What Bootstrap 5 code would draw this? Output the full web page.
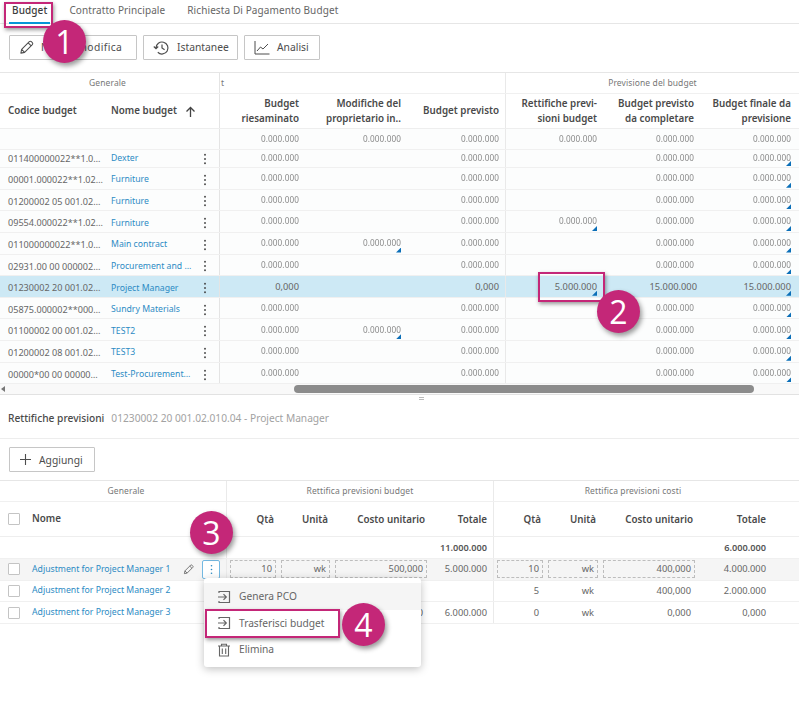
<!DOCTYPE html>
<html lang="it">
<head>
<meta charset="utf-8">
<title>Budget</title>
<link href="https://cdn.jsdelivr.net/npm/bootstrap@5.3.0/dist/css/bootstrap.min.css" rel="stylesheet">
<style>
html,body{margin:0;background:#fff}
body{font-family:"Noto Sans","Liberation Sans",sans-serif;font-size:9.3px;color:#666;width:799px;height:702px;overflow:hidden;position:relative}
.tabbar{height:24px;border-bottom:1px solid #e6e6e6;padding-left:9px;gap:16px}
.tabitem{font-size:10px;color:#666;padding:3px 3px 0;height:24px;line-height:15px;letter-spacing:.1px}
.tabitem.on{color:#3c3c3c;font-weight:500;border-bottom:2px solid #0696d7}
.tools{height:48px;padding:11px 0 0 9px;gap:6px}
.tbtn{height:25px;padding:0 9px;border:1px solid #c6c6c6;border-radius:1px;background:#fff;font-size:10.3px;color:#4d4d4d;display:flex;align-items:center;gap:7px;line-height:1;white-space:nowrap}
.tbtn:hover{background:#fff;color:#4d4d4d;border-color:#c6c6c6}
.tbtn svg{flex:none}
.w-a{width:128px;letter-spacing:.4px}
.w-b{width:95px}
.w-c{width:76px}
.w-d{width:86px}
.gb{display:grid;grid-template-columns:103px 92px 25px 85px 102px 99px 97px 97px 99px}
.gp{display:grid;grid-template-columns:227px 51px 54px 97px 65px 51px 55px 97px 75px 27px}
.rowline{border-bottom:1px solid #f0f0f0;background:#fcfdfd}
.r-g{height:22px;border-top:1px solid #e6e6e6;border-bottom:1px solid #f0f0f0;background:#fff}
.r-h{height:35px;border-bottom:1px solid #eee;background:#fff}
.r-t{height:21px}
.r-s{height:18px}
.r-n{height:21.65px}
.r-n .lf,.r-n .keb{padding-top:3px}
.sel{background:#cde9f5}
.ghead{font-size:8.5px;color:#777;display:flex;align-items:center;justify-content:center;letter-spacing:.1px}
.hc{font-size:9.8px;font-weight:600;color:#4a4a4a;line-height:14.5px;display:flex;align-items:center;padding-top:1px}
.hr{justify-content:flex-end;text-align:right;padding-right:6px}
.vl{position:relative;display:flex;align-items:center;justify-content:flex-end;padding-right:6px;white-space:nowrap;min-width:0}
.lf{display:flex;align-items:center;white-space:nowrap;overflow:hidden;min-width:0}
.cod{padding-left:8px;color:#666;font-size:9.1px}
.lnk{color:#2c8bc4;text-decoration:none;padding-left:8px;font-size:8.7px}
.keb{display:flex;align-items:center;justify-content:center;border-right:1px solid #e4e4e4;padding-right:4px}
.edge{border-right:1px solid #e9e9e9}
.endc{padding-right:8px}
.nudge{padding-right:3px}
.fz{font-size:8.2px;color:#8a8a8a;filter:blur(.7px);letter-spacing:.1px}
.tri{position:absolute;right:6px;bottom:1px;width:5px;height:5px;background:#0b6fb8;clip-path:polygon(100% 0,100% 100%,0 100%)}
.endc .tri{right:8px}
.sbar{height:11px;background:#f9f9f9;border-bottom:1px solid #e2e2e2;position:relative;padding:1px 45px 0 294px}
.sthumb{height:8px;background:#8c8c8c;border-radius:4px}
.sarrow{position:absolute;left:1px;top:2px;width:0;height:0;border-top:3px solid transparent;border-bottom:3px solid transparent;border-right:4px solid #777}
.splitter{height:6px;display:flex;align-items:center;padding-left:419px}
.split-mark{width:5px;height:3px;border-top:1px solid #bbb;border-bottom:1px solid #bbb}
.ttl{height:38px;border-bottom:1px solid #ededed;padding-left:8px;font-size:10.2px;gap:7px;align-items:center;padding-bottom:2px}
.ttl b{font-weight:500;color:#4a4a4a}
.ttl span{color:#a2a2a2}
.addbar{height:41px;padding:8px 0 0 9px}
.chk{width:12px;height:12px;border:1px solid #c4c4c4;border-radius:1px;background:#fff;flex:none;margin-left:8px}
.nm{color:#2c8bc4;text-decoration:none;font-size:8.7px;margin-left:12px}
.nmh{font-size:9.8px;font-weight:600;color:#4a4a4a;margin-left:12px}
.tt{font-weight:600;color:#555;font-size:9.2px}
.phd{padding-right:4px}
.ipt{position:absolute;top:1px;bottom:2px;left:3px;right:2px;border:1px dashed #bdbdbd;display:flex;align-items:center;justify-content:flex-end;padding-right:3px}
.r-h2{height:35px;border-bottom:1px solid #eee;background:#fff}
.r-p{height:21.65px;border-bottom:1px solid #f0f0f0;background:#fff}
.r-hi{background:#f5f5f5}
.rem{border-right:1px solid #eaeaea}
.ghoff{padding-left:26px}
.kbtn{width:18px;height:19px;border:1px solid #74b9e2;border-radius:2px;background:#fff;display:flex;align-items:center;justify-content:center;margin-left:8px;margin-right:6px;flex:none}
.menuish{position:absolute;left:204px;top:578px;width:217px;height:89px;background:#fff;border-radius:3px;box-shadow:0 2px 8px rgba(0,0,0,.25);padding-top:5px}
.mitem{height:26.5px;padding-left:13px;gap:8px;display:flex;align-items:center;font-size:10.2px;color:#666}
.mitem.first{background:#f5f5f5;height:27px}
.pinkbox{position:absolute;border:2px solid #c42778;box-shadow:1px 2px 4px rgba(0,0,0,.4)}
.dot-n{position:absolute;width:43px;height:43px;border-radius:50%;background:#c42778;color:#fff;font-family:"Open Sans","Liberation Sans",sans-serif;font-size:32px;display:flex;align-items:center;justify-content:center;box-shadow:2px 3px 5px rgba(0,0,0,.4);line-height:1}
</style>
</head>
<body>
<svg width="0" height="0" class="position-absolute">
<symbol id="kb" viewBox="0 0 4 14"><circle cx="2" cy="2" r="1.1"/><circle cx="2" cy="7" r="1.1"/><circle cx="2" cy="12" r="1.1"/></symbol>
<symbol id="pen" viewBox="0 0 16 16"><path d="M2 14l.8-4L11 1.8a1.6 1.6 0 0 1 2.2 0l1 1a1.6 1.6 0 0 1 0 2.2L6 13.2 2 14zM2.8 10L6 13.2M9.8 3l3.2 3.2" fill="none" stroke="currentColor" stroke-width="1.1" stroke-linejoin="round"/></symbol>
<symbol id="exit" viewBox="0 0 14 14"><path d="M2 3V1.5h10.5v11H2V11M1 7h8M6.5 4.2L9.3 7l-2.8 2.8" fill="none" stroke="currentColor" stroke-width="1.2"/></symbol>
</svg>

<nav class="tabbar d-flex">
<div class="tabitem on">Budget</div>
<div class="tabitem">Contratto Principale</div>
<div class="tabitem">Richiesta Di Pagamento Budget</div>
</nav>

<div class="tools d-flex">
<button class="btn tbtn w-a" type="button"><svg width="15" height="15"><use href="#pen"/></svg>Nuova modifica</button>
<button class="btn tbtn w-b" type="button"><svg width="17" height="16" viewBox="0 0 17 16"><path d="M3 8a6 6 0 1 1 1.8 4.3M9 4.5V8l2.6 1.8M.8 6.5L3 8.6l2.2-2.1" fill="none" stroke="currentColor" stroke-width="1.2"/></svg>Istantanee</button>
<button class="btn tbtn w-c" type="button"><svg width="16" height="15" viewBox="0 0 16 15"><path d="M1 1v13h14.5M3 11l3.5-4 2.5 2 5-5" fill="none" stroke="currentColor" stroke-width="1"/></svg>Analisi</button>
</div>

<section>
<div class="gb r-g"><div class="ghead keb" style="grid-column:span 3">Generale</div><div class="ghead edge" style="grid-column:span 3;justify-content:flex-start;padding-left:1px">t</div><div class="ghead" style="grid-column:span 3">Previsione del budget</div></div>
<div class="gb r-h">
<div class="hc" style="padding-left:8px">Codice budget</div>
<div class="hc" style="padding-left:8px;white-space:nowrap">Nome budget<svg class="ms-2" style="flex:none" width="11" height="12" viewBox="0 0 11 12"><path d="M5.5 11V1.5M1.5 5.5l4-4 4 4" fill="none" stroke="#444" stroke-width="1.3"/></svg></div>
<div class="keb"></div>
<div class="hc hr">Budget<br>riesaminato</div>
<div class="hc hr">Modifiche del<br>proprietario in..</div>
<div class="hc hr edge">Budget previsto</div>
<div class="hc hr">Rettifiche previ-<br>sioni budget</div>
<div class="hc hr">Budget previsto<br>da completare</div>
<div class="hc hr endc">Budget finale da<br>previsione</div>
</div>
<div class="gb r-t rowline"><div></div><div></div><div class="keb"></div><div class="vl"><span class="fz">0.000.000</span></div><div class="vl"><span class="fz">0.000.000</span></div><div class="vl edge"><span class="fz">0.000.000</span></div><div class="vl"><span class="fz">0.000.000</span></div><div class="vl"><span class="fz">0.000.000</span></div><div class="vl endc"><span class="fz">0.000.000</span></div></div>
<div class="gb r-s rowline"><div class="lf cod">011400000022**1.0…</div><div class="lf"><a class="lnk" href="#">Dexter</a></div><div class="keb"><svg width="4" height="12" fill="#444"><use href="#kb"/></svg></div><div class="vl"><span class="fz">0.000.000</span></div><div class="vl"></div><div class="vl edge"><span class="fz">0.000.000</span></div><div class="vl"></div><div class="vl"><span class="fz">0.000.000</span></div><div class="vl endc"><span class="fz">0.000.000</span><i class="tri"></i></div></div>
<div class="gb r-n rowline"><div class="lf cod">00001.000022**1.02…</div><div class="lf"><a class="lnk" href="#">Furniture</a></div><div class="keb"><svg width="4" height="12" fill="#444"><use href="#kb"/></svg></div><div class="vl"><span class="fz">0.000.000</span></div><div class="vl"></div><div class="vl edge"><span class="fz">0.000.000</span></div><div class="vl"></div><div class="vl"><span class="fz">0.000.000</span></div><div class="vl endc"><span class="fz">0.000.000</span><i class="tri"></i></div></div>
<div class="gb r-n rowline"><div class="lf cod">01200002 05 001.02…</div><div class="lf"><a class="lnk" href="#">Furniture</a></div><div class="keb"><svg width="4" height="12" fill="#444"><use href="#kb"/></svg></div><div class="vl"><span class="fz">0.000.000</span></div><div class="vl"></div><div class="vl edge"><span class="fz">0.000.000</span></div><div class="vl"></div><div class="vl"><span class="fz">0.000.000</span></div><div class="vl endc"><span class="fz">0.000.000</span><i class="tri"></i></div></div>
<div class="gb r-n rowline"><div class="lf cod">09554.000022**1.02…</div><div class="lf"><a class="lnk" href="#">Furniture</a></div><div class="keb"><svg width="4" height="12" fill="#444"><use href="#kb"/></svg></div><div class="vl"><span class="fz">0.000.000</span></div><div class="vl"></div><div class="vl edge"><span class="fz">0.000.000</span></div><div class="vl"><span class="fz">0.000.000</span><i class="tri"></i></div><div class="vl"><span class="fz">0.000.000</span></div><div class="vl endc"><span class="fz">0.000.000</span><i class="tri"></i></div></div>
<div class="gb r-n rowline"><div class="lf cod">011000000022**1.0…</div><div class="lf"><a class="lnk" href="#">Main contract</a></div><div class="keb"><svg width="4" height="12" fill="#444"><use href="#kb"/></svg></div><div class="vl"><span class="fz">0.000.000</span></div><div class="vl"><span class="fz">0.000.000</span><i class="tri"></i></div><div class="vl edge"><span class="fz">0.000.000</span></div><div class="vl"></div><div class="vl"><span class="fz">0.000.000</span></div><div class="vl endc"><span class="fz">0.000.000</span><i class="tri"></i></div></div>
<div class="gb r-n rowline"><div class="lf cod">02931.00 00 000002…</div><div class="lf"><a class="lnk" href="#">Procurement and …</a></div><div class="keb"><svg width="4" height="12" fill="#444"><use href="#kb"/></svg></div><div class="vl"><span class="fz">0.000.000</span></div><div class="vl"></div><div class="vl edge"><span class="fz">0.000.000</span></div><div class="vl"></div><div class="vl"><span class="fz">0.000.000</span></div><div class="vl endc"><span class="fz">0.000.000</span><i class="tri"></i></div></div>
<div class="gb r-n rowline sel"><div class="lf cod">01230002 20 001.02…</div><div class="lf"><a class="lnk" href="#">Project Manager</a></div><div class="keb"><svg width="4" height="12" fill="#444"><use href="#kb"/></svg></div><div class="vl">0,000</div><div class="vl"></div><div class="vl edge">0,000</div><div class="vl">5.000.000<i class="tri"></i></div><div class="vl nudge">15.000.000</div><div class="vl endc">15.000.000<i class="tri"></i></div></div>
<div class="gb r-n rowline"><div class="lf cod">05875.000002**000…</div><div class="lf"><a class="lnk" href="#">Sundry Materials</a></div><div class="keb"><svg width="4" height="12" fill="#444"><use href="#kb"/></svg></div><div class="vl"><span class="fz">0.000.000</span></div><div class="vl"></div><div class="vl edge"><span class="fz">0.000.000</span></div><div class="vl"></div><div class="vl"><span class="fz">0.000.000</span></div><div class="vl endc"><span class="fz">0.000.000</span><i class="tri"></i></div></div>
<div class="gb r-n rowline"><div class="lf cod">01100002 00 001.02…</div><div class="lf"><a class="lnk" href="#">TEST2</a></div><div class="keb"><svg width="4" height="12" fill="#444"><use href="#kb"/></svg></div><div class="vl"><span class="fz">0.000.000</span></div><div class="vl"><span class="fz">0.000.000</span><i class="tri"></i></div><div class="vl edge"><span class="fz">0.000.000</span></div><div class="vl"></div><div class="vl"><span class="fz">0.000.000</span></div><div class="vl endc"><span class="fz">0.000.000</span><i class="tri"></i></div></div>
<div class="gb r-n rowline"><div class="lf cod">01200002 08 001.02…</div><div class="lf"><a class="lnk" href="#">TEST3</a></div><div class="keb"><svg width="4" height="12" fill="#444"><use href="#kb"/></svg></div><div class="vl"><span class="fz">0.000.000</span></div><div class="vl"></div><div class="vl edge"><span class="fz">0.000.000</span></div><div class="vl"></div><div class="vl"><span class="fz">0.000.000</span></div><div class="vl endc"><span class="fz">0.000.000</span><i class="tri"></i></div></div>
<div class="gb r-n rowline"><div class="lf cod">00000*00 00 00000…</div><div class="lf"><a class="lnk" href="#">Test-Procurement…</a></div><div class="keb"><svg width="4" height="12" fill="#444"><use href="#kb"/></svg></div><div class="vl"><span class="fz">0.000.000</span></div><div class="vl"></div><div class="vl edge"><span class="fz">0.000.000</span></div><div class="vl"></div><div class="vl"><span class="fz">0.000.000</span></div><div class="vl endc"><span class="fz">0.000.000</span><i class="tri"></i></div></div>
<div class="sbar"><span class="sarrow"></span><div class="sthumb"></div></div>
<div class="splitter"><span class="split-mark"></span></div>
</section>

<section>
<div class="ttl d-flex"><b>Rettifiche previsioni</b><span>01230002 20 001.02.010.04 - Project Manager</span></div>
<div class="addbar"><button class="btn tbtn w-d" type="button"><svg width="13" height="13" viewBox="0 0 13 13"><path d="M6.5 1v11M1 6.5h11" fill="none" stroke="currentColor" stroke-width="1.1"/></svg>Aggiungi</button></div>
<div class="gp r-g"><div class="ghead rem ghoff">Generale</div><div class="ghead rem" style="grid-column:span 4">Rettifica previsioni budget</div><div class="ghead" style="grid-column:span 4">Rettifica previsioni costi</div></div>
<div class="gp r-h2">
<div class="lf rem"><span class="chk"></span><span class="nmh">Nome</span></div>
<div class="hc hr phd">Qtà</div><div class="hc hr phd">Unità</div><div class="hc hr phd">Costo unitario</div><div class="hc hr rem">Totale</div>
<div class="hc hr phd">Qtà</div><div class="hc hr phd">Unità</div><div class="hc hr phd">Costo unitario</div><div class="hc hr">Totale</div><div></div>
</div>
<div class="gp r-p"><div class="rem"></div><div></div><div></div><div></div><div class="vl tt rem">11.000.000</div><div></div><div></div><div></div><div class="vl tt">6.000.000</div><div></div></div>
<div class="gp r-p r-hi"><div class="lf rem"><span class="chk"></span><a class="nm" href="#">Adjustment for Project Manager 1</a><svg class="ms-auto" style="flex:none" width="11" height="11" color="#555"><use href="#pen"/></svg><span class="kbtn"><svg width="3" height="11" fill="#2c8bc4"><use href="#kb"/></svg></span></div>
<div class="vl"><span class="ipt">10</span></div><div class="vl"><span class="ipt">wk</span></div><div class="vl"><span class="ipt">500,000</span></div><div class="vl rem">5.000.000</div>
<div class="vl"><span class="ipt">10</span></div><div class="vl"><span class="ipt">wk</span></div><div class="vl"><span class="ipt">400,000</span></div><div class="vl">4.000.000</div><div></div></div>
<div class="gp r-p"><div class="lf rem"><span class="chk"></span><a class="nm" href="#">Adjustment for Project Manager 2</a></div>
<div class="vl"></div><div class="vl"></div><div class="vl"></div><div class="vl rem"></div>
<div class="vl">5</div><div class="vl">wk</div><div class="vl">400,000</div><div class="vl">2.000.000</div><div></div></div>
<div class="gp r-p"><div class="lf rem"><span class="chk"></span><a class="nm" href="#">Adjustment for Project Manager 3</a></div>
<div class="vl"></div><div class="vl"></div><div class="vl">0,000</div><div class="vl rem">6.000.000</div>
<div class="vl">0</div><div class="vl">wk</div><div class="vl">0,000</div><div class="vl">0,000</div><div></div></div>
</section>

<div class="menuish">
<div class="mitem first"><svg width="14" height="14"><use href="#exit"/></svg>Genera PCO</div>
<div class="mitem"><svg width="14" height="14"><use href="#exit"/></svg>Trasferisci budget</div>
<div class="mitem"><svg width="14" height="14" viewBox="0 0 14 14"><path d="M1 3h12M4.5 3V1.2h5V3M2.5 3v10h9V3M5.3 5.5v5.5M8.7 5.5v5.5" fill="none" stroke="currentColor" stroke-width="1.1"/></svg>Elimina</div>
</div>

<div class="pinkbox" style="left:4px;top:2px;width:49px;height:26px"></div>
<div class="pinkbox" style="left:538px;top:272px;width:67px;height:30px"></div>
<div class="pinkbox" style="left:205px;top:609px;width:135px;height:29px"></div>
<div class="dot-n" style="left:43px;top:20px">1</div>
<div class="dot-n" style="left:597px;top:290px">2</div>
<div class="dot-n" style="left:190px;top:511px">3</div>
<div class="dot-n" style="left:342px;top:603px">4</div>
<script src="https://cdn.jsdelivr.net/npm/bootstrap@5.3.0/dist/js/bootstrap.bundle.min.js"></script>
</body>
</html>
